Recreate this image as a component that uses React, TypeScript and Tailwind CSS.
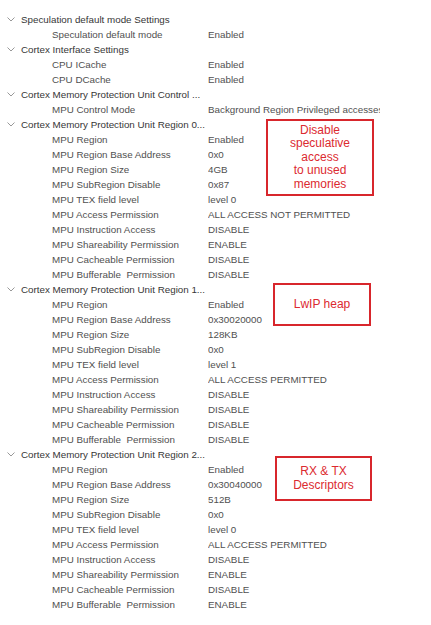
import type { ReactNode } from "react";

type Row = [string, string];

type Section = {
  title: string;
  rows: Row[];
};

const sections: Section[] = [
  {
    title: "Speculation default mode Settings",
    rows: [["Speculation default mode", "Enabled"]],
  },
  {
    title: "Cortex Interface Settings",
    rows: [
      ["CPU ICache", "Enabled"],
      ["CPU DCache", "Enabled"],
    ],
  },
  {
    title: "Cortex Memory Protection Unit Control ...",
    rows: [["MPU Control Mode", "Background Region Privileged accesses only"]],
  },
  {
    title: "Cortex Memory Protection Unit Region 0...",
    rows: [
      ["MPU Region", "Enabled"],
      ["MPU Region Base Address", "0x0"],
      ["MPU Region Size", "4GB"],
      ["MPU SubRegion Disable", "0x87"],
      ["MPU TEX field level", "level 0"],
      ["MPU Access Permission", "ALL ACCESS NOT PERMITTED"],
      ["MPU Instruction Access", "DISABLE"],
      ["MPU Shareability Permission", "ENABLE"],
      ["MPU Cacheable Permission", "DISABLE"],
      ["MPU Bufferable  Permission", "DISABLE"],
    ],
  },
  {
    title: "Cortex Memory Protection Unit Region 1...",
    rows: [
      ["MPU Region", "Enabled"],
      ["MPU Region Base Address", "0x30020000"],
      ["MPU Region Size", "128KB"],
      ["MPU SubRegion Disable", "0x0"],
      ["MPU TEX field level", "level 1"],
      ["MPU Access Permission", "ALL ACCESS PERMITTED"],
      ["MPU Instruction Access", "DISABLE"],
      ["MPU Shareability Permission", "DISABLE"],
      ["MPU Cacheable Permission", "DISABLE"],
      ["MPU Bufferable  Permission", "DISABLE"],
    ],
  },
  {
    title: "Cortex Memory Protection Unit Region 2...",
    rows: [
      ["MPU Region", "Enabled"],
      ["MPU Region Base Address", "0x30040000"],
      ["MPU Region Size", "512B"],
      ["MPU SubRegion Disable", "0x0"],
      ["MPU TEX field level", "level 0"],
      ["MPU Access Permission", "ALL ACCESS PERMITTED"],
      ["MPU Instruction Access", "DISABLE"],
      ["MPU Shareability Permission", "ENABLE"],
      ["MPU Cacheable Permission", "DISABLE"],
      ["MPU Bufferable  Permission", "ENABLE"],
    ],
  },
];

function Chevron() {
  return (
    <svg width="8" height="5" viewBox="0 0 8 5" className="shrink-0">
      <path d="M0.5 0.5 L4 4 L7.5 0.5" fill="none" stroke="#8c8c8c" strokeWidth="0.9" />
    </svg>
  );
}

function Callout({ className, children }: { className: string; children: ReactNode }) {
  return (
    <div
      className={`absolute flex flex-col items-center justify-center border-2 border-[#d8262c] bg-white text-center text-[12px] leading-[13.5px] text-[#dc2a30] ${className}`}
    >
      {children}
    </div>
  );
}

export default function App() {
  return (
    <div className="relative h-[625px] w-[431px] overflow-hidden bg-white pt-[12px] font-['Liberation_Sans',Arial,sans-serif] text-[9.8px]">
      {sections.map((section) => (
        <div key={section.title}>
          <div className="flex h-[15px] items-center whitespace-nowrap pl-[7px] text-[#363636]">
            <Chevron />
            <span className="ml-[6px] leading-[15px]">{section.title}</span>
          </div>

          {section.rows.map(([label, value], i) => (
            <div key={i} className="flex h-[15px] items-center whitespace-pre leading-[15px] text-[#505050]">
              <span className="w-[208px] shrink-0 pl-[52px]">{label}</span>
              <span className="w-[172px] shrink-0 overflow-hidden">{value}</span>
            </div>
          ))}
        </div>
      ))}

      <Callout className="left-[266px] top-[119px] h-[77px] w-[108px]">
        <span>Disable</span>
        <span>speculative</span>
        <span>access</span>
        <span>to unused</span>
        <span>memories</span>
      </Callout>

      <Callout className="left-[273px] top-[283px] h-[43px] w-[98px]">
        <span>LwIP heap</span>
      </Callout>

      <Callout className="left-[275px] top-[456px] h-[45px] w-[97px]">
        <span>RX &amp; TX</span>
        <span>Descriptors</span>
      </Callout>
    </div>
  );
}
